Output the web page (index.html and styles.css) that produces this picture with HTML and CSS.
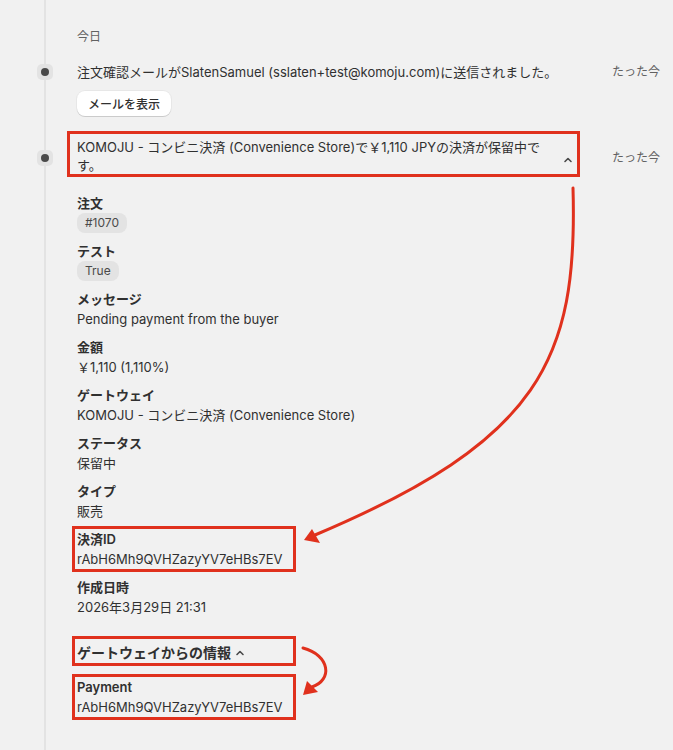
FILE: index.html
```html
<!DOCTYPE html>
<html lang="ja">
<head>
  <meta charset="UTF-8" />
  <title>タイムライン</title>
  <link rel="stylesheet" href="styles.css">
</head>
<body>
  <div class="timeline">
    <div class="day">今日</div>

    <div class="event">
      <div class="event-head">
        <span class="dot"></span>
        <p class="event-text">注文確認メールがSlatenSamuel (sslaten+test@komoju.com)に送信されました。</p>
        <span class="time">たった今</span>
      </div>
      <button class="btn">メールを表示</button>
    </div>

    <div class="event event--open">
      <div class="event-head">
        <span class="dot"></span>
        <div class="event-text hl hl-head">
          <p>KOMOJU - コンビニ決済 (Convenience Store)で￥1,110 JPYの決済が保留中です。</p>
          <svg class="chevron" width="12" height="12" viewBox="0 0 12 12"><path d="M3 7.5 6 4.5 9 7.5" fill="none" stroke="#4a4a4a" stroke-width="1.6" stroke-linecap="round" stroke-linejoin="round"/></svg>
        </div>
        <span class="time">たった今</span>
      </div>

      <dl class="details">
        <div class="field"><dt>注文</dt><dd><span class="badge">#1070</span></dd></div>
        <div class="field"><dt>テスト</dt><dd><span class="badge">True</span></dd></div>
        <div class="field"><dt>メッセージ</dt><dd>Pending payment from the buyer</dd></div>
        <div class="field"><dt>金額</dt><dd>￥1,110 (1,110%)</dd></div>
        <div class="field"><dt>ゲートウェイ</dt><dd>KOMOJU - コンビニ決済 (Convenience Store)</dd></div>
        <div class="field"><dt>ステータス</dt><dd>保留中</dd></div>
        <div class="field"><dt>タイプ</dt><dd>販売</dd></div>
        <div class="field hl hl-inline"><dt>決済ID</dt><dd>rAbH6Mh9QVHZazyYV7eHBs7EV</dd></div>
        <div class="field"><dt>作成日時</dt><dd>2026年3月29日 21:31</dd></div>
      </dl>

      <div class="gateway">
        <h3 class="gateway-title hl">ゲートウェイからの情報
          <svg class="chevron" width="12" height="12" viewBox="0 0 12 12"><path d="M3 7.5 6 4.5 9 7.5" fill="none" stroke="#4a4a4a" stroke-width="1.6" stroke-linecap="round" stroke-linejoin="round"/></svg>
        </h3>
        <dl class="field hl gateway-field"><dt>Payment</dt><dd>rAbH6Mh9QVHZazyYV7eHBs7EV</dd></dl>
      </div>
    </div>
  </div>

  <!-- 注釈の矢印 -->
  <svg class="arrows" width="673" height="750" viewBox="0 0 673 750">
    <path d="M573 188 C578 360 540 440 315 535" fill="none" stroke="#e0311d" stroke-width="3" stroke-linecap="round"/>
    <polygon points="304,540 312,529 320,543" fill="#e0311d"/>
    <path d="M303 648 C330 655 333 680 312 687" fill="none" stroke="#e0311d" stroke-width="3" stroke-linecap="round"/>
    <polygon points="303,695 307,681 318,692" fill="#e0311d"/>
  </svg>
</body>
</html>
```

FILE: styles.css
```css
body {
  margin: 0;
  background: #f1f1f1;
  color: #303030;
  font-family: Inter, "Noto Sans CJK JP", sans-serif;
  font-size: 13px;
  line-height: 20px;
  position: relative;
  width: 673px;
  height: 750px;
  overflow: hidden;
}

.timeline {
  position: relative;
  box-sizing: border-box;
  min-height: 750px;
  padding: 28px 13px 28px 77px;
}

.timeline::before {
  content: "";
  position: absolute;
  top: 0;
  bottom: 0;
  left: 44px;
  width: 2px;
  background: #e3e3e3;
}

.day {
  font-size: 12px;
  line-height: 18px;
  color: #616161;
}

.event {
  margin-top: 17px;
}

.event--open {
  margin-top: 23px;
}

.event-head {
  position: relative;
  display: flex;
  align-items: center;
}

.dot {
  position: absolute;
  left: -40px;
  top: 50%;
  width: 16px;
  height: 16px;
  margin-top: -8px;
  border-radius: 5px;
  background: #e3e3e3;
}

.dot::after {
  content: "";
  position: absolute;
  left: 4px;
  top: 4px;
  width: 8px;
  height: 8px;
  border-radius: 50%;
  background: #4a4a4a;
}

.event-text {
  margin: 0;
  width: 503px;
  flex: none;
  line-height: 18px;
}

.time {
  margin-left: auto;
  font-size: 12px;
  line-height: 18px;
  color: #616161;
}

.btn {
  margin-top: 10px;
  height: 25px;
  padding: 0 11px;
  border: 0;
  border-radius: 8px;
  background: #fff;
  box-shadow: 0 1px 0 rgba(0,0,0,0.12), 0 0 0 1px rgba(0,0,0,0.04);
  font-family: inherit;
  font-size: 12px;
  font-weight: 550;
  color: #303030;
}

/* 赤枠の注釈 */
.hl {
  box-sizing: border-box;
  border: 3px solid #e0311d;
  padding: 0 2px;
  margin-left: -5px;
  width: 224px;
}

.hl-head {
  display: flex;
  align-items: center;
  gap: 16px;
  width: 513px;
  margin-left: -10px;
  margin-top: -8px;
  padding: 4px 3px 0 7px;
}

.hl-head p {
  margin: 0;
  flex: 1;
}

.hl-head .chevron {
  flex: none;
  margin-top: 8px;
}

.hl-inline {
  margin-top: -3px;
  margin-bottom: -3px;
}

.details {
  margin: 16px 0 0;
  display: flex;
  flex-direction: column;
  gap: 8px;
}

.field dt {
  font-weight: 600;
}

.field dd {
  margin: 0;
}

.badge {
  display: inline-block;
  height: 20px;
  padding: 0 8px;
  border-radius: 8px;
  background: #e3e3e3;
  font-size: 12px;
  line-height: 20px;
  color: #4a4a4a;
  vertical-align: top;
}

.gateway {
  margin-top: 19px;
}

.gateway-title {
  margin: 0 0 0 -5px;
  padding-top: 4px;
  font-size: 14px;
  font-weight: 700;
  line-height: 20px;
}

.gateway-title .chevron {
  vertical-align: -1px;
}

.gateway-field {
  margin-top: 8px;
  margin-bottom: 0;
}

.arrows {
  position: absolute;
  top: 0;
  left: 0;
  pointer-events: none;
}
```
